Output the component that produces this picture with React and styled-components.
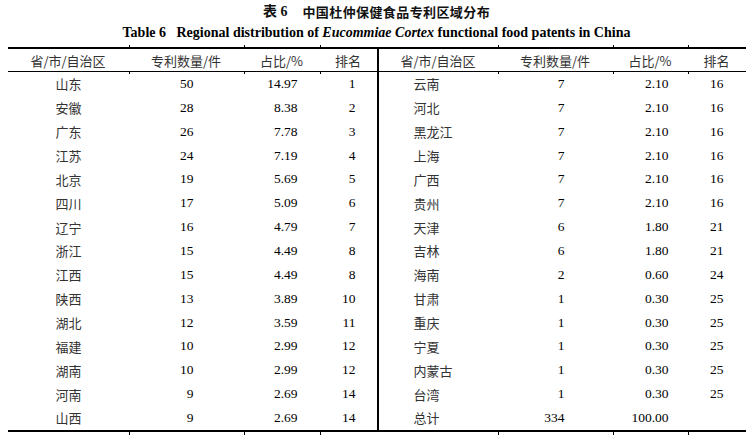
import React from 'react'
import styled, { createGlobalStyle, css } from "styled-components";

const GlobalStyle = createGlobalStyle`
  html, body {
    margin: 0;
    padding: 0;
    background: #ffffff;
  }
  body {
    font-family: "Liberation Serif", "Noto Sans CJK SC", serif;
    color: #000;
  }
`

const left = [
  ['山东', 50, '14.97', 1],
  ['安徽', 28, '8.38', 2],
  ['广东', 26, '7.78', 3],
  ['江苏', 24, '7.19', 4],
  ['北京', 19, '5.69', 5],
  ['四川', 17, '5.09', 6],
  ['辽宁', 16, '4.79', 7],
  ['浙江', 15, '4.49', 8],
  ['江西', 15, '4.49', 8],
  ['陕西', 13, '3.89', 10],
  ['湖北', 12, '3.59', 11],
  ['福建', 10, '2.99', 12],
  ['湖南', 10, '2.99', 12],
  ['河南', 9, '2.69', 14],
  ['山西', 9, '2.69', 14],
]

const right = [
  ['云南', 7, '2.10', 16],
  ['河北', 7, '2.10', 16],
  ['黑龙江', 7, '2.10', 16],
  ['上海', 7, '2.10', 16],
  ['广西', 7, '2.10', 16],
  ['贵州', 7, '2.10', 16],
  ['天津', 6, '1.80', 21],
  ['吉林', 6, '1.80', 21],
  ['海南', 2, '0.60', 24],
  ['甘肃', 1, '0.30', 25],
  ['重庆', 1, '0.30', 25],
  ['宁夏', 1, '0.30', 25],
  ['内蒙古', 1, '0.30', 25],
  ['台湾', 1, '0.30', 25],
  ['总计', 334, '100.00', ''],
]

// padding for the body cells, one per column (left half, then right half)
const bodyCols = [
  { align: 'left', pad: 48 },
  { align: 'right', pad: 50 },
  { align: 'right', pad: 22 },
  { align: 'right', pad: 21 },
  { align: 'left', pad: 35, divider: true },
  { align: 'right', pad: 48 },
  { align: 'right', pad: 19 },
  { align: 'right', pad: 22 },
]

const heads = ['省/市/自治区', '专利数量/件', '占比/%', '排名']

function App() {
  return (
    <Page>
      <GlobalStyle />
      <TitleCn><b>表 6</b><span>中国杜仲保健食品专利区域分布</span></TitleCn>
      <TitleEn>Table 6&nbsp;&nbsp;&nbsp;Regional distribution of <i>Eucommiae Cortex</i> functional food patents in China</TitleEn>
      <Table>
        <HeadRow>
          {[...heads, ...heads].map((h, i) => (
            <HeadCell key={i} $divider={i === 4} $tick={i !== 0 && i !== 4}>{h}</HeadCell>
          ))}
        </HeadRow>
        {left.map((row, r) => {
          const cells = [...row, ...right[r]]
          const last = r === left.length - 1
          return (
            <Row key={r} $last={last}>
              {cells.map((v, i) => (
                <Cell
                  key={i}
                  $align={bodyCols[i].align}
                  $pad={bodyCols[i].pad}
                  $divider={bodyCols[i].divider}
                  $cn={typeof v === 'string' && /[\u4e00-\u9fff]/.test(v)}
                  $tick={last && i !== 0 && i !== 4}
                >{v}</Cell>
              ))}
            </Row>
          )
        })}
      </Table>
    </Page>
  )
}

export default App

const Page = styled.div`
width: 751px;
height: 437px;
padding-top: 2px;
box-sizing: border-box;
display: flex;
flex-direction: column;
align-items: center;
overflow: hidden;
`
const TitleCn = styled.div`
height: 20px;
line-height: 20px;
font-size: 13px;
font-weight: 700;
color: #111;
display: flex;
align-items: center;
padding-left: 2px;
b {
  font-family: "Liberation Serif", "Noto Sans CJK SC", serif;
  font-weight: 700;
  font-size: 14px;
}
span {
  margin-left: 15px;
  font-family: "Noto Sans CJK SC", sans-serif;
  letter-spacing: 0.4px;
}
`
const TitleEn = styled.div`
height: 22px;
line-height: 22px;
font-size: 14px;
font-weight: 700;
font-family: "Liberation Serif", serif;
color: #000;
padding-left: 2px;
i {
  font-style: italic;
}
`
const Table = styled.div`
margin-top: 3px;
width: 738px;
margin-left: 2px;
display: flex;
flex-direction: column;
`
const grid = css`
display: grid;
grid-template-columns: 121px 115px 76px 57px 121px 115px 75px 58px;
`
const HeadRow = styled.div`
${grid};
height: 22px;
border-top: 2px solid #000;
border-bottom: 1px solid #000;
`
const tickCss = css`
position: relative;
&::before, &::after {
  content: '';
  position: absolute;
  left: 0;
  width: 1px;
  background: #000;
}
`
const HeadCell = styled.div`
display: flex;
align-items: center;
justify-content: center;
font-family: "Noto Sans CJK SC", sans-serif;
font-size: 13px;
color: #333;
box-sizing: border-box;
${p => p.$divider && css`border-left: 2px solid #000;`}
${p => p.$tick && css`
  ${tickCss};
  &::before { top: -4px; height: 2px; }
  &::after { bottom: -3px; height: 2px; }
`}
`
const Row = styled.div`
${grid};
height: 23.87px;
${p => p.$last && css`border-bottom: 2px solid #000;`}
`
const Cell = styled.div`
display: flex;
align-items: center;
box-sizing: border-box;
justify-content: ${p => p.$align === 'left' ? 'flex-start' : 'flex-end'};
${p => p.$align === 'left' ? `padding-left: ${p.$pad}px;` : `padding-right: ${p.$pad}px;`}
font-size: ${p => p.$cn ? '13px' : '13.5px'};
font-family: ${p => p.$cn ? '"Noto Sans CJK SC", sans-serif' : '"Liberation Serif", serif'};
color: ${p => p.$cn ? '#333' : '#000'};
${p => p.$divider && css`border-left: 2px solid #000;`}
${p => p.$tick && css`
  ${tickCss};
  &::after { bottom: -5px; height: 3px; }
`}
`
